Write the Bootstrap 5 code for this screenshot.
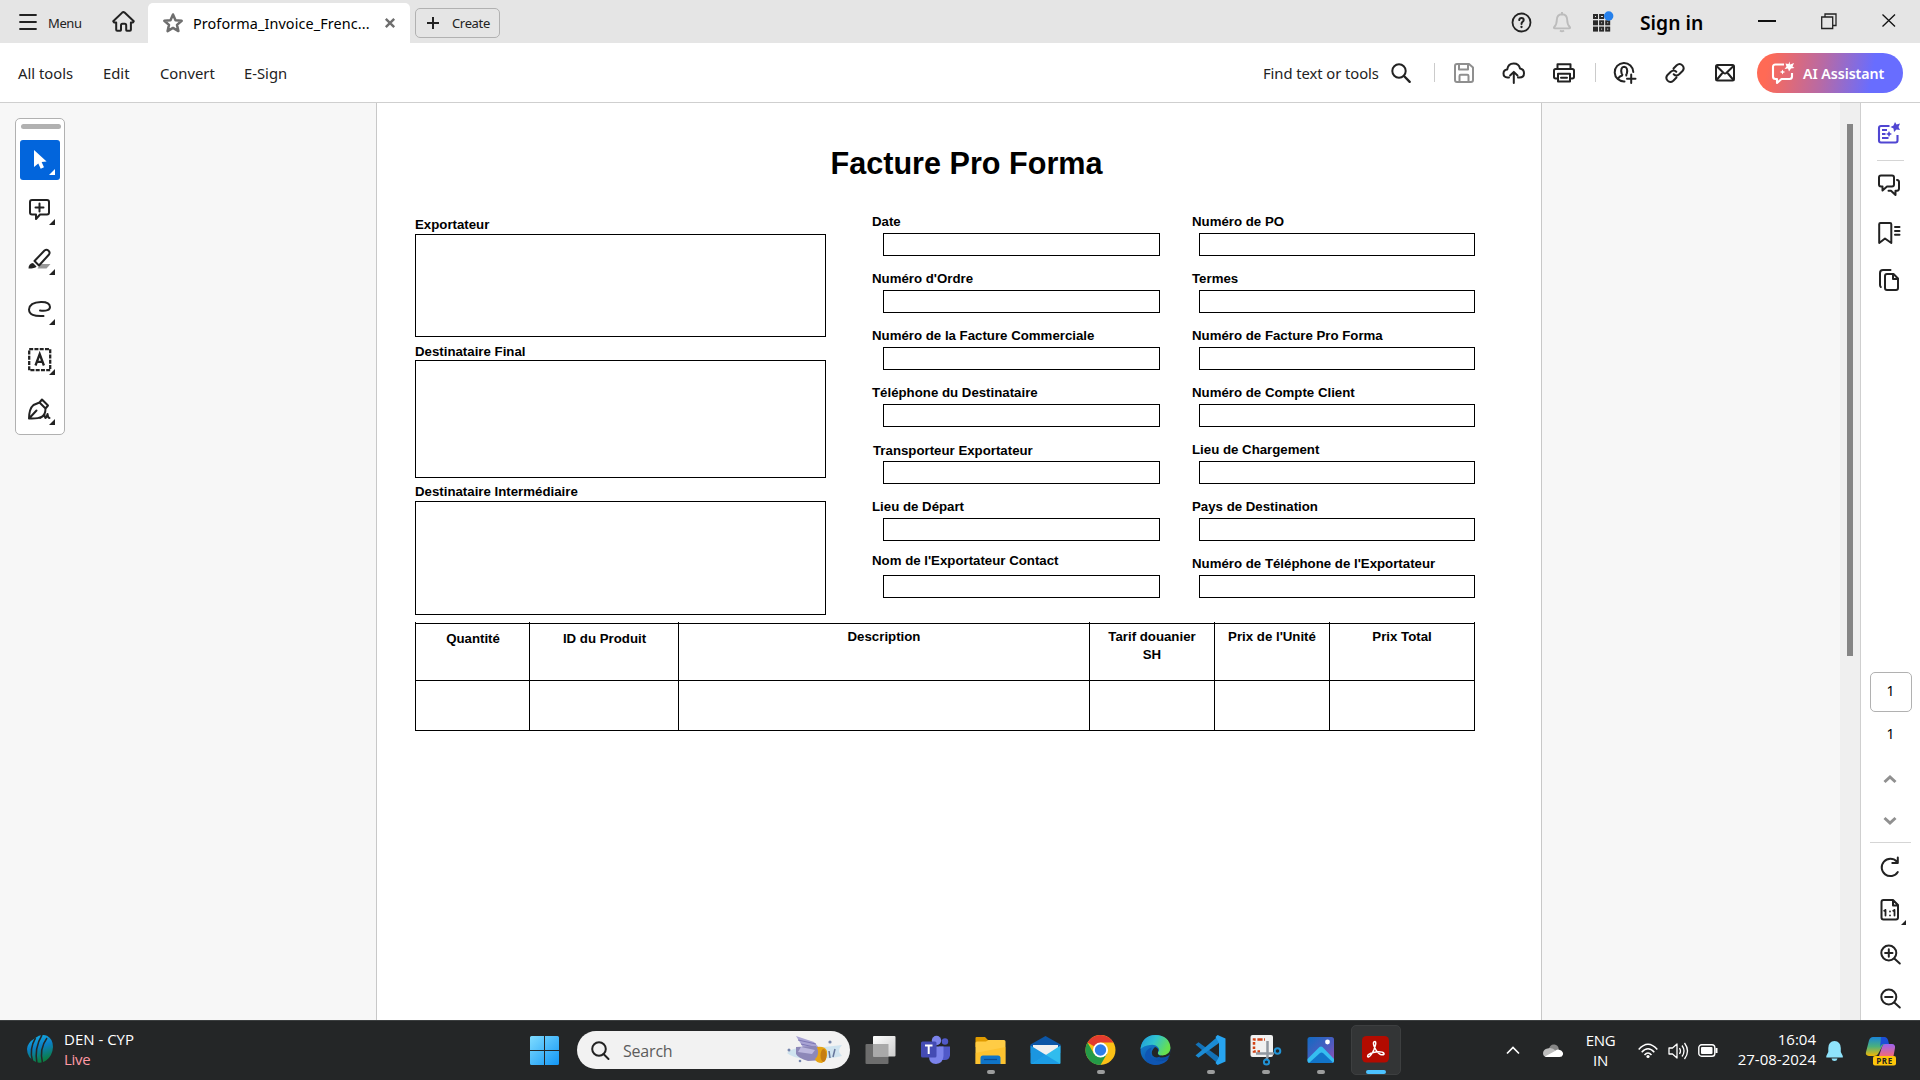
<!DOCTYPE html>
<html lang="fr">
<head>
<meta charset="utf-8">
<meta name="viewport" content="width=device-width, initial-scale=1">
<title>Proforma_Invoice_French.pdf</title>
<link href="https://cdn.jsdelivr.net/npm/bootstrap@5.3.0/dist/css/bootstrap.min.css" rel="stylesheet">
<style>
  body { width: 1920px; height: 1080px; overflow: hidden; font-family: "Noto Sans", sans-serif; color: #222; background: #fff; }
  svg { display: block; flex: none; overflow: visible; }
  .ln { fill: none; stroke: #222; stroke-width: 2; stroke-linecap: round; stroke-linejoin: round; }
  .text-nowrap { line-height: 20px; }

  /* title bar */
  .titlebar { height: 43px; background: #e5e5e5; padding-left: 19px; display: grid; align-items: center;
    grid-template-columns: 29px 64px 36px 267px 85px 1fr 42px 39px 48px 118px 63px 61px 38px; }
  .menu-txt { font-size: 13px; letter-spacing: -.4px; padding-top: 4px; }
  .doc-tab { width: 262px; height: 40px; background: #fff; border-radius: 5px 5px 0 0; align-self: end; padding-left: 15px; color: #000; font-size: 14.4px; }
  .doc-name { margin-left: 10px; width: 192px; letter-spacing: .1px; padding-top: 1px; }
  .create-btn { height: 30px; border: 1px solid #b1b1b1; border-radius: 5px; padding: 0 0 0 11px; font-size: 13px; letter-spacing: -.35px; margin-top: 3px; color: #222; }
  .create-btn span { margin-left: 13px; padding-top: 1px; }
  .signin { font-size: 19.3px; font-weight: 600; color: #000; padding-top: 3px; }

  /* tool bar */
  .toolbar { height: 60px; border-bottom: 1px solid #cfcfcf; padding-left: 18px; display: grid; align-items: center; font-size: 14.8px;
    grid-template-columns: 85px 57px 84px 1fr 128px 43px 20px 48px 51px 42px 19px 51px 50px 42px 163px; }
  .toolbar > span { padding-top: 1px; }
  .find-txt { letter-spacing: -.07px; }
  .rule-v { width: 1px; height: 19px; background: #cbcbcb; }
  .ai-btn { width: 146px; height: 40px; border-radius: 20px; padding: 0 0 0 15px; color: #fff; font-size: 14.2px; font-weight: 600; letter-spacing: -.05px;
    background: linear-gradient(100deg, #ff6a55 8%, #b76aa5 45%, #686dff 78%); }
  .ai-btn span { margin-left: 8px; padding-top: 2px; }

  /* workspace */
  .workspace { height: 917px; background: #f7f7f7; }
  .left-zone { width: 376px; padding: 15px 0 0 15px; }
  .palette { width: 50px; height: 317px; background: #fff; border: 1px solid #b1b1b1; border-radius: 5px; padding: 5px 4px; }
  .grip { width: 40px; height: 5px; border-radius: 3px; background: #b1b1b1; margin: 0 0 11px 1px; }
  .tool-btn { width: 40px; height: 40px; border-radius: 3px; margin-bottom: 10px; }
  .tool-on { background: #0265dc; }
  .sheet { width: 1166px; background: #fff; border-left: 1px solid #c8c8c8; border-right: 1px solid #c8c8c8;
    font-family: "Liberation Sans", sans-serif; font-weight: 700; font-size: 13.25px; color: #000; padding: 40px 66px 0 38px; }
  .sheet-title { font-family: "Liberation Sans", sans-serif; font-size: 30.6px; font-weight: 700; line-height: 40px; margin: 0 0 30px 415.5px; white-space: nowrap; }
  .fields { display: grid; grid-template-columns: 457px 320px 284px; height: 409px; }
  .fld-label { display: block; line-height: 18px; white-space: nowrap; margin: 0; }
  .party-first { padding-top: 3px; }
  .party-box { width: 411px; border: 1px solid #000; }
  .box-a { height: 103px; margin: 0 0 6px; }
  .box-b { height: 118px; margin: -1px 0 5px; }
  .box-c { height: 114px; }
  .fld { height: 57px; }
  .fld-box { display: block; width: 277px; height: 23px; border: 1px solid #000; border-radius: 0; padding: 0 4px; margin: 2px 0 0 11px; background: #fff; }
  .col-two .fld-box { margin-left: 7px; width: 276px; }
  .lower .fld-label { margin: 1px 0 -1px 1px; }
  .raise .fld-label { margin: -3px 0 3px; }
  .items { display: grid; grid-template-columns: 114px 149px 411px 125px 115px 146px; width: 1060px; }
  .th-cell, .td-cell { border-left: 1px solid #000; text-align: center; line-height: 17.5px; }
  .th-cell { height: 59px; padding-top: 6px; background: linear-gradient(#000,#000) 0 1px / 100% 1px no-repeat; }
  .td-cell { height: 51px; border-bottom: 1px solid #000; border-top: 1px solid #000; margin-top: -1px; }
  .items > :nth-child(6n) { border-right: 1px solid #000; }
  .nudge { padding: 7.5px 0 0 1px; }
  .right-zone { width: 298px; }
  .track { width: 20px; background: #efefef; padding: 21px 0 0 7px; }
  .thumb { width: 6px; height: 532px; background: #858585; }
  .rail { width: 60px; background: #fff; border-left: 1px solid #cfcfcf; color: #000; font-size: 14px; }
  .rail-top { padding: 20px 0 0 17px; height: 569px; }
  .rail-top svg { margin-bottom: 25px; }
  .rail-top .ai-doc { margin: -1px 0 16px; }
  .rail-top .talk { margin-top: 14px; }
  .rail hr { margin: 0; border: 0; height: 1px; width: 41px; background: #d5d5d5; opacity: 1; }
  .rail-top hr { width: 27px; margin-left: -1px; }
  .page-no { width: 42px; height: 40px; border: 1px solid #b1b1b1; border-radius: 5px; padding: 0 1px 3px 0; }
  .page-sum { width: 41px; height: 65px; padding-top: 12px; line-height: 20px; }
  .rail-low { padding-left: 9px; }

  /* task bar */
  .taskbar { height: 60px; background: #242627; border-top: 1px solid #3b3e3f; color: #fff; font-family: "Open Sans", sans-serif; font-size: 15px; line-height: 20px; display: grid;
    grid-template-columns: 27px 37px 466px 47px 276px 640.5px 1fr; align-items: center; }
  .live { color: #ff99a4; letter-spacing: -.3px; }
  .ball { margin-top: -4px; }
  .scores { margin-top: -4px; }
  .search-pill { width: 273px; height: 38px; border-radius: 19px; background: #f2f2f2; color: #5c5c5c; font-size: 16px; padding-left: 14px; margin-top: -1px; }
  .search-pill .word { margin-left: 13px; width: 164px; letter-spacing: -.2px; padding-top: 1px; }
  .app { width: 55px; height: 50px; padding-top: 9.5px; position: relative; margin-top: -1px; }
  .app::after { content: ""; position: absolute; bottom: 1px; left: 23.5px; width: 8px; height: 4px; border-radius: 2px; background: #9c9d9d; }
  .quiet::after { display: none; }
  .app-on::before { content: ""; position: absolute; inset: 0 2.5px; background: #333536; border: 1px solid #3d3f40; border-radius: 5px; }
  .app-on svg { position: relative; }
  .app-on::after { width: 20px; left: 17.5px; background: #4cc2ff; }
  .tray { display: grid; align-items: center; padding-left: 12.5px; grid-template-columns: 37px 39px 56px 30px 30px 35px 83px 43px 40px; }
  .lang { width: 33px; margin: -2px 0 0 2px; letter-spacing: -.3px; }
  .clock { margin-top: -4px; }
  .bell { margin-left: 10px; }
  .copilot { margin-left: 7px; }
</style>
<script src="https://cdn.jsdelivr.net/npm/bootstrap@5.3.0/dist/js/bootstrap.bundle.min.js"></script>
</head>
<body class="d-flex flex-column">

<header class="titlebar">
  <svg width="18" height="16" class="ln"><path d="M1 1h16M1 8h16M1 15h16" stroke-width="1.8"/></svg>
  <span class="menu-txt">Menu</span>
  <svg width="23" height="21" class="ln"><path d="M1.2 10.3 10.2 1.6q1.2-1 2.4 0l9.2 8.7-.8 1.2h-2.1v7.2q0 1-1 1h-3.1q-.6 0-.6-.8v-4.5q0-1.6-1.4-1.6h-2.4q-1.4 0-1.4 1.6v4.5q0 .8-.7.8H5.2q-1 0-1-1v-7.200H2z"/></svg>
  <div class="doc-tab d-flex align-items-center">
    <svg width="20" height="20" fill="none" stroke="#6e6e6e" stroke-width="2.5" stroke-linejoin="round"><path d="m10 1.500 2.500 5.700 6.200.6-4.700 4.100 1.400 6.200L10 14.900l-5.400 3.200L6 11.900 1.300 7.800l6.200-.6z"/></svg>
    <span class="doc-name text-nowrap">Proforma_Invoice_Frenc...</span>
    <svg width="10" height="10" fill="none" stroke="#6e6e6e" stroke-width="2.4"><path d="m.8.8 8.400 8.400M9.200.8.8 9.200"/></svg>
  </div>
  <button class="btn create-btn d-flex align-items-center"><svg width="12" height="12" class="ln"><path d="M6 0v12M0 6h12" stroke-linecap="butt"/></svg><span>Create</span></button>
  <span></span>
  <svg width="20" height="20" class="ln"><circle cx="10.500" cy="10.500" r="9" stroke-width="1.8"/><path d="M8.200 8.100q.2-2 2.300-2 2.200 0 2.200 1.900 0 1.200-1.200 1.900-1 .7-1 2"/><path d="M10.500 14.800v.2" stroke-width="2.300"/></svg>
  <svg width="19" height="21" fill="none" stroke="#bcbcbc" stroke-width="1.900" stroke-linejoin="round"><path d="M9 3.200Q14.100 3.400 14.200 9q0 4.500 2.600 7 .8 1.300-.6 1.400H1.800q-1.400-.1-.6-1.400 2.600-2.500 2.600-7 .1-5.600 5.200-5.800zM7 19.500q2 1.500 4 0M9 1v2.200"/></svg>
  <svg width="23" height="22"><g fill="none" stroke="#2a2a2a" stroke-width="2"><rect x="2" y="4" width="3" height="3"/><rect x="8.100" y="4" width="3" height="3"/><rect x="2" y="10.300" width="3" height="3"/><rect x="8.100" y="10.300" width="3" height="3"/><rect x="14.200" y="10.300" width="3" height="3"/><rect x="2" y="16.600" width="3" height="3"/><rect x="8.100" y="16.600" width="3" height="3"/><rect x="14.200" y="16.600" width="3" height="3"/></g><circle cx="16.700" cy="5" r="4.700" fill="#2680eb"/></svg>
  <span class="signin text-nowrap">Sign in</span>
  <svg width="18" height="4"><path d="M0 1h18" stroke="#111" stroke-width="2"/></svg>
  <svg width="16" height="18" fill="none" stroke="#222" stroke-width="1.300"><path d="M.7 4h11v11.500H.7zM4 4V1h11v11.500h-3.300"/></svg>
  <svg width="14" height="16" stroke="#111" stroke-width="1.300"><path d="m.5.500 12.500 12M13 .5l-12.500 12"/></svg>
</header>

<nav class="toolbar">
  <span>All tools</span><span>Edit</span><span>Convert</span><span>E-Sign</span>
  <span class="find-txt text-nowrap">Find text or tools</span>
  <svg width="20" height="20" class="ln"><circle cx="8" cy="8" r="6.700"/><path d="m13 13 5.700 5.800" stroke-width="2.400"/></svg>
  <i class="rule-v"></i>
  <svg width="20" height="20" fill="none" stroke="#8f8f8f" stroke-width="2" stroke-linejoin="round"><path d="M3 1h12l4 3.500V17q0 2-2 2H3q-2 0-2-2V3q0-2 2-2zM5 1v5.500h9V1M5.500 19v-6q0-1.200 1.200-1.200h6.600q1.200 0 1.200 1.200v6"/></svg>
  <svg width="23" height="21" class="ln"><path d="M7 15.500H5.500Q1.500 15.200 1.500 11.500q0-3.600 3.700-4Q6 1.500 11.700 1.500q5.200 0 6.300 5Q22 7.200 22 11.200 22 15.400 17.500 15.500H16M11.800 21V10.500M8.100 13.500l3.700-3.600 3.700 3.600"/></svg>
  <svg width="22" height="20" class="ln"><path d="M4.500 6V1.200h13V6M4.500 15.500H2.700Q1 15.500 1 13.800V7.700Q1 6 2.700 6h16.600Q21 6 21 7.700v6.100q0 1.700-1.700 1.700h-1.800M5 10.800h12v7.800H5zM8 14.700h6"/></svg>
  <i class="rule-v"></i>
  <svg width="23" height="22" class="ln"><path d="M10.500 19.500A9.300 9.300 0 1 1 19.300 10M4.200 16.700q1-2.500 4-3.200.6-.8-.6-2.200-1.400-6.200 2.500-6.500 4 .3 2.800 6.500-1 1.400-.6 2.200M17.200 12.500v8.500M13 16.700h8.500"/></svg>
  <svg width="20" height="20" class="ln"><path d="m8.500 5.500 3.200-3.200q3-2.500 5.700.1 2.500 2.700.1 5.600l-3.300 3.200q-3 2.500-5.500 0M11.500 14.500l-3.200 3.200q-3 2.500-5.700-.1-2.500-2.700-.1-5.600l3.300-3.200q3-2.500 5.500 0"/></svg>
  <svg width="20" height="18" class="ln"><rect x="1" y="1" width="18" height="15.500" rx="1.500"/><path d="m2 2.500 6.700 6.500q1.300 1 2.600 0L18 2.500M2 15.500l5-6M18 15.500l-5-6"/></svg>
  <button class="btn ai-btn border-0 d-flex align-items-center text-nowrap">
    <svg width="23" height="23" fill="none" stroke="#fff" stroke-width="2.100" stroke-linejoin="round"><path d="M12 3.500H3.500Q1 3.500 1 6v9.500Q1 18 3.500 18H5v4l4.500-4h8q2.500 0 2.500-2.500V12"/><path d="M17.500.5 18 3.500l4-1.500-1.500 3.500 2 1.500-3.500.5L17 10.500l-1-3-3.500.500 2-2.500-1-3 3 .5zM10.500 8.500l.8 1.700 2 .8-2 .8-.8 1.700-.8-1.700-2-.8 2-.8z" fill="#fff" stroke="none"/></svg>
    <span>AI Assistant</span></button>
</nav>

<main class="workspace d-flex">
  <aside class="left-zone">
    <div class="palette">
      <div class="grip"></div>
      <div class="tool-btn tool-on"><svg width="40" height="40"><path d="M14 10v17l4.300-3.500 2.400 5.300 3.300-1.500-2.400-5.300 5-.6z" fill="#fff"/><path d="M35 29v6h-6z" fill="#fff"/></svg></div>
      <div class="tool-btn"><svg width="40" height="40"><path class="ln" d="M12 10h15q2 0 2 2v10.500q0 2-2 2h-7L16 29v-4.500h-4q-2 0-2-2V12q0-2 2-2zM19.500 13.500v8M15.500 17.500h8"/><path d="M35 29v6h-6z" fill="#222"/></svg></div>
      <div class="tool-btn"><svg width="40" height="40"><path d="m20.500 24h10l-4 4.500h-9z" fill="#999"/><path class="ln" d="m14.500 21 10-10.500q2-1.500 3.800 0 2.200 2 .7 4L19 25.500z"/><path d="M8.500 28.500q0-5 4.500-5.500l3.500 3.500q-1.500 2-8 2z" fill="#222"/><path d="M35 29v6h-6z" fill="#222"/></svg></div>
      <div class="tool-btn"><svg width="40" height="40"><path class="ln" d="M20 20.500q10 1 10-3.500-.4-5.200-9-5-11.500.4-12 7.500.3 7.500 14.500 6.500"/><path d="M35 29v6h-6z" fill="#222"/></svg></div>
      <div class="tool-btn"><svg width="40" height="40"><rect x="9.200" y="9.200" width="21" height="21" fill="none" stroke="#222" stroke-width="2.300" stroke-dasharray="4 1.250"/><path d="M15.500 25.500 19.700 14l4.200 11.500M17 21.800h5.500" fill="none" stroke="#222" stroke-width="2.300"/><path d="M35 29v6h-6z" fill="#222"/></svg></div>
      <div class="tool-btn"><svg width="40" height="40"><path class="ln" d="M9 28.500q.2-10 4.500-13.500l6-2.500 6 6q0 6-3.500 8-4 2.500-13 2zM9.500 28l7-7.500M19.500 12.500 22 9.500l6 6-2.500 3M20 28q3-1 4.500-3.500.3 3.500 1 3.500 1-.2 2-4 .6 4 2 4"/><path d="M35 29v6h-6z" fill="#222"/></svg></div>
    </div>
  </aside>

  <article class="sheet">
    <h1 class="sheet-title">Facture Pro Forma</h1>
    <div class="fields">
      <div>
        <label class="fld-label party-first">Exportateur</label>
        <div class="party-box box-a"></div>
        <label class="fld-label">Destinataire Final</label>
        <div class="party-box box-b"></div>
        <label class="fld-label">Destinataire Intermédiaire</label>
        <div class="party-box box-c"></div>
      </div>
      <div>
        <div class="fld d-flex flex-column"><label class="fld-label">Date</label><input class="fld-box"></div>
        <div class="fld d-flex flex-column"><label class="fld-label">Numéro d'Ordre</label><input class="fld-box"></div>
        <div class="fld d-flex flex-column"><label class="fld-label">Numéro de la Facture Commerciale</label><input class="fld-box"></div>
        <div class="fld d-flex flex-column"><label class="fld-label">Téléphone du Destinataire</label><input class="fld-box"></div>
        <div class="fld d-flex flex-column lower"><label class="fld-label">Transporteur Exportateur</label><input class="fld-box"></div>
        <div class="fld d-flex flex-column"><label class="fld-label">Lieu de Départ</label><input class="fld-box"></div>
        <div class="fld d-flex flex-column raise"><label class="fld-label">Nom de l'Exportateur Contact</label><input class="fld-box"></div>
      </div>
      <div class="col-two">
        <div class="fld d-flex flex-column"><label class="fld-label">Numéro de PO</label><input class="fld-box"></div>
        <div class="fld d-flex flex-column"><label class="fld-label">Termes</label><input class="fld-box"></div>
        <div class="fld d-flex flex-column"><label class="fld-label">Numéro de Facture Pro Forma</label><input class="fld-box"></div>
        <div class="fld d-flex flex-column"><label class="fld-label">Numéro de Compte Client</label><input class="fld-box"></div>
        <div class="fld d-flex flex-column"><label class="fld-label">Lieu de Chargement</label><input class="fld-box"></div>
        <div class="fld d-flex flex-column"><label class="fld-label">Pays de Destination</label><input class="fld-box"></div>
        <div class="fld d-flex flex-column"><label class="fld-label">Numéro de Téléphone de l'Exportateur</label><input class="fld-box"></div>
      </div>
    </div>
    <div class="items">
      <div class="th-cell nudge">Quantité</div><div class="th-cell nudge">ID du Produit</div><div class="th-cell">Description</div><div class="th-cell">Tarif douanier<br>SH</div><div class="th-cell">Prix de l'Unité</div><div class="th-cell">Prix Total</div>
      <div class="td-cell"></div><div class="td-cell"></div><div class="td-cell"></div><div class="td-cell"></div><div class="td-cell"></div><div class="td-cell"></div>
    </div>
  </article>

  <div class="right-zone"></div>
  <div class="track"><div class="thumb"></div></div>
  <aside class="rail">
    <div class="rail-top">
      <svg width="22" height="22" fill="none" stroke="#5046d2" stroke-width="2.100" stroke-linejoin="round" class="ai-doc"><path d="M11.500 4H3Q1 4 1 6v12.500q0 2 2 2h14.500q2 0 2-2V13M4 8h5M4 12h3.500M4 16h6.500"/><path d="m17 0 1.500 2.500L22 1.500l-1.500 3.500 1.500 3-3.500-.5L16 10l-.5-3.500-3-1.500 3-1.500zM11 9l1 2 2 1-2 1-1 2-1-2-2-1 2-1z" fill="#5046d2" stroke="none"/></svg>
      <hr>
      <svg width="22" height="22" class="ln talk"><path d="M3 .5h11q2 0 2 2v7q0 2-2 2H9l-4.500 4v-4H3q-2 0-2-2v-7q0-2 2-2zM19 5q2 .3 2 2v6.500q0 2-2 2.300h-1.500V20L13 15.800h-2.500"/></svg>
      <svg width="22" height="22" class="ln"><path d="M2.500 1H12q1.300 0 1.300 1.300V21L7 16.500 1.200 21V2.300Q1.200 1 2.500 1zM17 5h4.500M17 9h4.500M17 12.700h4.500"/></svg>
      <svg width="22" height="22" class="ln"><path d="M2.800 18Q2 17.300 2 16V4Q2 1 5 1h7.500M9 5h6.500l4.500 4.500V19q0 2-2 2H9q-2 0-2-2V7q0-2 2-2zM15 5v5h5"/></svg>
    </div>
    <div class="rail-low">
      <div class="page-no d-flex justify-content-center align-items-center">1</div>
      <div class="page-sum text-center">1</div>
      <svg width="42" height="65"><g fill="none" stroke="#909090" stroke-width="3"><path d="m14.500 5 5.500-5 5.500 5M14.500 41l5.500 5 5.500-5"/></g></svg>
      <hr>
      <svg width="46" height="177"><g class="ln"><path d="M26.800 18.500A8.700 8.700 0 1 0 27.800 29M27.800 14.500v5.500h-5.500"/><path d="M23 57H13.500q-2 0-2 2v15.500q0 2 2 2h12.500q2 0 2-2V62zM23 57v5.500h5"/><path d="M15.500 67v5.500M24.500 67v5.500M20 68.500v.1M20 72.300v.1M14.200 67.800l1.300-.8M23.200 67.800l1.300-.8" stroke-width="1.800"/><circle cx="18.800" cy="110" r="7.500"/><path d="m24.300 115.500 5.500 5M15.100 110h7.400M18.800 106.300v7.400"/><circle cx="18.800" cy="154" r="7.500"/><path d="m24.300 159.500 5.500 5M15.100 154h7.400"/></g><path d="M36 77v5h-5z" fill="#222"/></svg>
    </div>
  </aside>
</main>

<footer class="taskbar">
  <span></span>
  <svg width="26" height="28" class="ball"><defs><linearGradient id="ball" x2=".3" y2="1"><stop stop-color="#16b6ea"/><stop offset=".5" stop-color="#0b7fc5"/><stop offset="1" stop-color="#0b7d45"/></linearGradient></defs><path d="M7.500 3.500Q14-1.500 20 .8 26 4 26 12q-.5 9-7 13.500-5 3.500-10 1.500Q0 23 0 14 .5 7.500 7.500 3.500z" fill="url(#ball)"/><path d="M8.500 3Q2 14 5.500 26M15 0Q7 13 10 29M20 3q-8 11-4.500 25" fill="none" stroke="#242627" stroke-width="1.500"/></svg>
  <div class="scores">DEN - CYP<br><span class="live">Live</span></div>
  <svg width="29" height="29"><defs><linearGradient id="win" x2="1" y2="1"><stop stop-color="#7fdcff"/><stop offset="1" stop-color="#1296f5"/></linearGradient></defs><path d="M1.500 0H14v14H0V1.500Q0 0 1.500 0zM15 0h12.500Q29 0 29 1.500V14H15zM0 15h14v14H1.500Q0 29 0 27.500zM15 15h14v12.500q0 1.500-1.500 1.500H15z" fill="url(#win)"/></svg>
  <div class="search-pill d-flex align-items-center">
    <svg width="19" height="19" class="ln"><circle cx="8" cy="8" r="6.800"/><path d="m12.500 13 5 5"/></svg>
    <span class="word">Search</span>
    <svg width="56" height="28"><path d="M0 17q8-7 20-4l35-4q-6 6 0 11-18 4-30 2Q8 24 0 17z" fill="#cfe3ef"/><path d="m9 0 18 6 8 9-18-2z" fill="#a9a4d4"/><path d="m11 4 18 4M14 8l17 4" stroke="#7e78b5"/><path d="m9 11 20-1 8 14-16 1q-10-3-12-7z" fill="#8d88b8"/><path d="m14 11 14 3-3 4-14-2z" fill="#bcb8de"/><path d="M30 11q8-1 10 4 1 8-5 12-6 0-7-4 5-4 2-12z" fill="#e6a414"/><ellipse cx="36.500" cy="19.500" rx="3" ry="6.500" fill="#c67d12"/><path d="m42 15 1 7M48 13l-2 8" stroke="#66759a" stroke-width="1.500"/><circle cx="43" cy="6" r="1.600" fill="#7585ac"/><circle cx="2" cy="14" r="1.500" fill="#7585ac"/><circle cx="13" cy="25" r="1.300" fill="#7585ac"/></svg>
  </div>

  <div class="d-flex">
    <div class="app quiet"><svg width="55" height="30"><defs><linearGradient id="tv" x2="1" y2="1"><stop stop-color="#fff"/><stop offset="1" stop-color="#ccc"/></linearGradient></defs><rect x="12.500" y="9" width="23" height="20" rx="1" fill="#6d6d6d"/><rect x="20" y="1" width="22.500" height="20.500" rx="1" fill="url(#tv)"/><path d="M20 9h15.500v12.500H20z" fill="#a9a9a9"/></svg></div>
    <div class="app quiet"><svg width="55" height="30"><circle cx="28.500" cy="5.500" r="4.700" fill="#7b83eb"/><circle cx="37" cy="6.500" r="3.200" fill="#5059c9"/><path d="M31 11.500h11v9q-1 5-6 4.500h-5z" fill="#5059c9"/><path d="M21 11.500h14.500v9.500q-.5 7.500-7.500 8-7 0-7-8z" fill="#7b83eb"/><rect x="13" y="6.500" width="15.500" height="16" rx="1.500" fill="#444bb4"/><path d="M17 10.500h7.500M20.700 10.500v8.500" stroke="#fff" stroke-width="2"/></svg></div>
    <div class="app"><svg width="55" height="30"><path d="M12.500 3q0-1 1-1h8.500l3 3H41v7H12.500z" fill="#e09b00"/><path d="M12.500 8q0-1.500 1.500-1.500h9l2.500-1.500H41q1.500 0 1.500 1.500V29h-30z" fill="#ffcc45"/><path d="M12.500 18 42.500 12v17h-30z" fill="#fbb91e" opacity=".55"/><path d="M17.500 29v-6q0-2.500 2.500-2.500h15q2.500 0 2.500 2.500v6z" fill="#0f74c8"/><path d="M21 24.500h13" stroke="#0a4c93" stroke-width="1.200"/></svg></div>
    <div class="app quiet"><svg width="55" height="30"><path d="m12.500 9.500 15-8.500 15 8.500V18h-30z" fill="#0c56a6"/><path d="M15 10h25v13H15z" fill="#f0f0f0"/><path d="m12.500 10.500 30 18.500h-29q-1 0-1-1z" fill="#1b96e0"/><path d="M42.500 10.500v17q0 1.500-1.500 1.500H14z" fill="#30bcee"/><path d="m27 19.500 15.500 9.500h-28z" fill="#1c9de6"/></svg></div>
    <div class="app"><svg width="55" height="30"><circle cx="27.500" cy="15" r="15" fill="#fbc116"/><path d="M27.500 15 14.500 7.500A15 15 0 0 1 40.500 7.500H27.500z" fill="#e33b2e"/><path d="M14.500 7.500A15 15 0 0 0 27.500 30L34 18.700 21 18.700z" fill="#249a48"/><circle cx="27.500" cy="15" r="7.500" fill="#fff"/><circle cx="27.500" cy="15" r="5.700" fill="#2e7de9"/></svg></div>
    <div class="app quiet"><svg width="55" height="30"><defs><linearGradient id="eg" x2="1" y2=".4"><stop stop-color="#1d96dd"/><stop offset=".5" stop-color="#30c3cf"/><stop offset="1" stop-color="#67e04d"/></linearGradient><linearGradient id="eb" x2=".6" y2="1"><stop stop-color="#168dd8"/><stop offset="1" stop-color="#0b4aa3"/></linearGradient></defs><circle cx="27.500" cy="15" r="15" fill="url(#eb)"/><path d="M31 22q5 1.500 9.500-1.500l2-1.500V12z" fill="#242627"/><path d="M12.500 14Q14 .5 27.500 0q14 .6 15 13-.6 7-8 7.500-6-.3-4.500-3.500 2-1.500.5-4-3-4-8.500-3-6 .7-9.500 4z" fill="url(#eg)"/><path d="M24 12.500q-4 6 .5 11 5 4.500 13.500 1.500l3-2q-4 7-14 7-10-1-10-10 .8-6 7-7.500z" fill="#0f56b3"/><path d="M27 12q4 1 3 5-1 3 3 4-5 3-8.500-.5-2.500-4 2.500-8.500z" fill="#242627"/></svg></div>
    <div class="app"><svg width="55" height="30"><path d="m12.500 9.500 3-2.300L36 22v7.500z" fill="#1372b8"/><path d="m12.500 20.500 3 2.300L36 8V.5z" fill="#1b8bd4"/><path d="M34.500 0 42.500 3.500v23l-8 3.500-2-2L36 22V8l-3.500-6z" fill="#27a4f0"/></svg></div>
    <div class="app"><svg width="55" height="30"><rect x="12.500" y="0" width="22.500" height="22" rx="2" fill="#f1f1f1"/><path d="M22 4.500h-6v12h6" fill="none" stroke="#d24317" stroke-width="2.500" stroke-dasharray="2.600 1.700"/><path d="M22 4.500h5" stroke="#d24317" stroke-width="2.500" stroke-dasharray="2.600 1.500"/><path d="M29.500 6v16l-1 2.500M18 18.500h18" fill="none" stroke="#9198a0" stroke-width="2.500"/><circle cx="39.500" cy="16" r="2.800" fill="none" stroke="#2193d6" stroke-width="2"/><circle cx="28.500" cy="27" r="2.600" fill="none" stroke="#2193d6" stroke-width="2"/></svg></div>
    <div class="app"><svg width="55" height="30"><defs><linearGradient id="ph" x2="1" y2="1"><stop stop-color="#116bc2"/><stop offset=".6" stop-color="#515bc0"/><stop offset="1" stop-color="#9b4fae"/></linearGradient></defs><rect x="14.500" y="2" width="26.500" height="26" rx="2.500" fill="url(#ph)"/><path d="m14.500 24 12-12q1.500-1 3 0L41 24v1.500q0 2.500-2.500 2.500H17q-2.500 0-2.500-2.500z" fill="#35bef0"/><path d="m16 28 11-10q1.500-1 3 0l10 9.500-1.500.5z" fill="#1274c9"/><circle cx="34.500" cy="7" r="2.400" fill="#fff"/></svg></div>
    <div class="app app-on"><svg width="55" height="30"><rect x="14" y="1" width="27" height="26.500" rx="4.500" fill="#b30b00"/><path d="M27 6.500q-2.500 0-1 4.500 2.500 6.500 6.500 8.500 4 1 3.500-1-1.500-2.200-8-1.500-6 1-8 3-1 2 .5 2 2.500-.8 5.500-7.500 3-7.500 1-8z" fill="none" stroke="#fff" stroke-width="1.500"/></svg></div>
  </div>

  <div class="tray">
    <svg width="14" height="9" fill="none" stroke="#fff" stroke-width="1.700"><path d="m1 7.500 6-6 6 6"/></svg>
    <svg width="20" height="14"><path d="M6 5q1-5 5.500-4.500Q15 1 15.500 4l1 5H5z" fill="#868686"/><path d="M0 9q.5-4 4.500-4.500Q9 3 13 7l2 6H4Q0 13 0 9z" fill="#bdbdbd"/><path d="M2 12.500 12 7q2-2.500 5-1 3.500 1.500 3 4.500-.6 2.500-3.500 2.500H4q-1.500 0-2-.5z" fill="#fff"/></svg>
    <div class="lang text-center">ENG<br>IN</div>
    <svg width="20" height="16" fill="none" stroke="#fff" stroke-width="1.500"><path d="M.7 6.500q9.300-10.500 18.600 0M3.700 9.300q6.300-7 12.600 0M6.500 12q3.500-4 7 0"/><circle cx="10" cy="13.500" r="1.600" fill="#fff" stroke="none"/></svg>
    <svg width="20" height="18" fill="none" stroke="#fff" stroke-width="1.300" stroke-linejoin="round"><path d="M1 6h3.500L9 2v14l-4.500-4H1zM11.500 6q2 3 0 6M14 3.500q4 5.500 0 11M16.500 1q6 8 0 16"/></svg>
    <svg width="20" height="13"><rect x=".8" y=".8" width="16" height="11.400" rx="2.800" fill="none" stroke="#fff" stroke-width="1.400"/><rect x="3" y="3" width="11.500" height="7" rx="1" fill="#fff"/><path d="M18.500 4v5" stroke="#fff" stroke-width="2"/></svg>
    <div class="clock text-end text-nowrap">16:04<br>27-08-2024</div>
    <svg width="17" height="20" class="bell"><path d="M8.500 0q6 .3 6.300 7v4l2 4v1.500H.3V15l2-4V7q.2-6.700 6.200-7zM5.500 17.500h6Q11 20 8.500 20t-3-2.500z" fill="#8fe3fb"/></svg>
    <svg width="30" height="28" class="copilot"><defs><linearGradient id="ca" y2="1" x2="0"><stop stop-color="#1a86d9"/><stop offset=".5" stop-color="#4bb07c"/><stop offset="1" stop-color="#f2b705"/></linearGradient><linearGradient id="cb" y2="1" x2="0"><stop stop-color="#9b62f0"/><stop offset="1" stop-color="#f26a7a"/></linearGradient></defs><path d="M7 0h10q3 0 4 3l1 5h-5l-5 9q-1 2-4 2H3q-4-.5-3-4L3 3.500Q4 0 7 0z" fill="url(#ca)"/><path d="M15 0h3q3 0 4 3l1 4h-5q-3 0-4 4z" fill="#1b4fd6"/><path d="M20 7h6q3.500.3 3 4l-1.500 8H13l3-9q1-3 4-3z" fill="url(#cb)"/><rect x="7" y="19" width="23" height="9.500" rx="2" fill="#ffc60a"/><text x="18.500" y="26.800" font-size="8" font-weight="700" text-anchor="middle" fill="#222" letter-spacing=".5">PRE</text></svg>
  </div>
</footer>
</body>
</html>
